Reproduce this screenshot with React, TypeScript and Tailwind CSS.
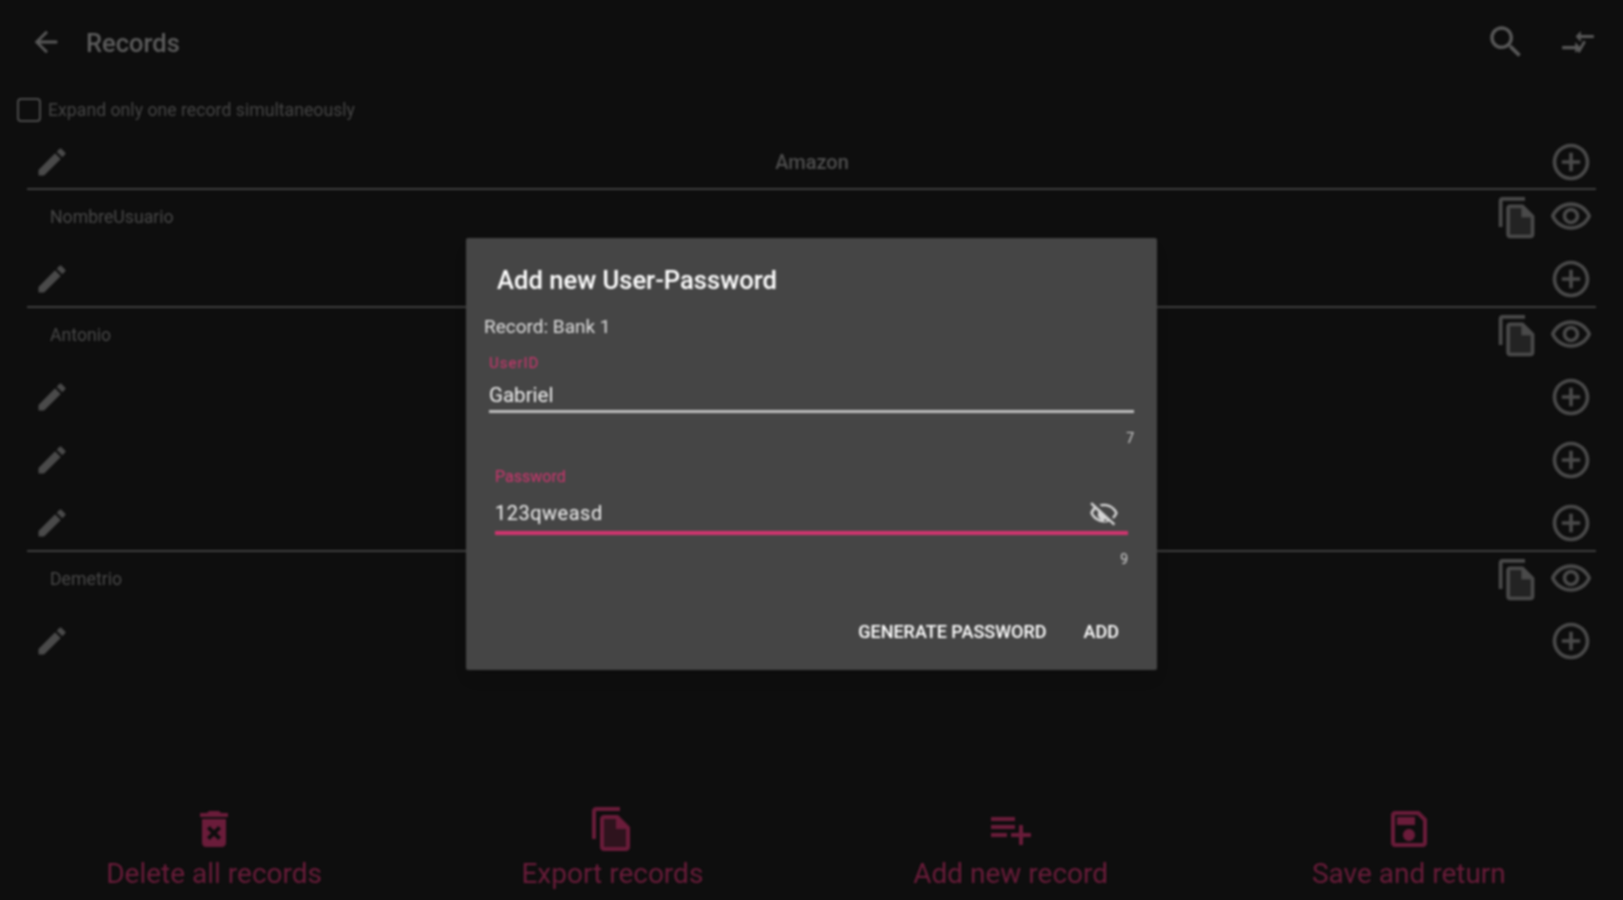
const paths = {
  back: "M20 11H7.83l5.59-5.59L12 4l-8 8 8 8 1.41-1.41L7.83 13H20v-2z",
  search:
    "M15.5 14h-.79l-.28-.27C15.41 12.59 16 11.11 16 9.5 16 5.91 13.09 3 9.5 3S3 5.91 3 9.5 5.91 16 9.5 16c1.61 0 3.09-.59 4.23-1.57l.27.28v.79l5 4.99L20.49 19l-4.99-5zm-6 0C7.01 14 5 11.99 5 9.5S7.01 5 9.5 5 14 7.01 14 9.5 11.99 14 9.5 14z",
  edit: "M3 17.25V21h3.75L17.81 9.94l-3.75-3.75L3 17.25zM20.71 7.04c.39-.39.39-1.02 0-1.41l-2.34-2.34c-.39-.39-1.02-.39-1.41 0l-1.83 1.83 3.75 3.75 1.83-1.83z",
  add: "M13 7h-2v4H7v2h4v4h2v-4h4v-2h-4V7zm-1-5C6.48 2 2 6.48 2 12s4.48 10 10 10 10-4.48 10-10S17.52 2 12 2zm0 18c-4.41 0-8-3.59-8-8s3.59-8 8-8 8 3.59 8 8-3.59 8-8 8z",
  copy: "M16 1H4c-1.1 0-2 .9-2 2v14h2V3h12V1zm-1 4H8c-1.1 0-1.99.9-1.99 2L6 21c0 1.1.89 2 1.99 2H19c1.1 0 2-.9 2-2V11l-6-6zM8 21V7h6v5h5v9H8z",
  copyInner: "M8 21V7h6v5h5v9H8z",
  eye: "M12 6c3.79 0 7.17 2.13 8.82 5.5C19.17 14.87 15.79 17 12 17s-7.17-2.13-8.82-5.5C4.83 8.13 8.21 6 12 6m0-2C7 4 2.73 7.11 1 11.5 2.73 15.89 7 19 12 19s9.27-3.11 11-7.5C21.27 7.11 17 4 12 4zm0 5c1.38 0 2.5 1.12 2.5 2.5S13.38 14 12 14s-2.5-1.12-2.5-2.5S10.62 9 12 9m0-2c-2.48 0-4.5 2.02-4.5 4.5S9.52 16 12 16s4.5-2.02 4.5-4.5S14.48 7 12 7z",
  trash:
    "M6 19c0 1.1.9 2 2 2h8c1.1 0 2-.9 2-2V7H6v12zm2.46-7.12l1.41-1.41L12 12.59l2.12-2.12 1.41 1.41L13.41 14l2.12 2.12-1.41 1.41L12 15.41l-2.12 2.12-1.41-1.41L10.59 14l-2.13-2.12zM15.5 4l-1-1h-5l-1 1H5v2h14V4z",
  playlist: "M14 10H2v2h12v-2zm0-4H2v2h12V6zm4 8v-4h-2v4h-4v2h4v4h2v-4h4v-2h-4zM2 16h8v-2H2v2z",
  save: "M17 3H5c-1.11 0-2 .9-2 2v14c0 1.1.89 2 2 2h14c1.1 0 2-.9 2-2V7l-4-4zm2 16H5V5h11.17L19 7.83V19zm-7-7c-1.66 0-3 1.34-3 3s1.34 3 3 3 3-1.34 3-3-1.34-3-3-3zM6 6h9v4H6V6z",
  swap: "M2 14.5h8.2V12l3.3 3.5-3.3 3.5v-2.5H2v-2zM22 9.5h-8.2V12l-3.3-3.5L13.8 5v2.5H22v2zM15.5 11l1.5 1-4 7-1.5-1 4-7z",
  eyeOff:
    "M12 6.5c3.79 0 7.17 2.13 8.82 5.5-.6 1.2-1.4 2.3-2.4 3.1l1.4 1.4c1.4-1.2 2.5-2.8 3.18-4.5C21.27 7.61 17 4.5 12 4.5c-1.3 0-2.5.2-3.7.6l1.7 1.6c.6-.1 1.3-.2 2-.2zM2.4 3.3L1 4.7l2.7 2.7C2.5 8.5 1.6 10.1 1 12c1.73 4.39 6 7.5 11 7.5 1.5 0 3-.3 4.3-.8l3.3 3.3 1.4-1.4L2.4 3.3zM12 17.5c-3.79 0-7.17-2.13-8.82-5.5.6-1.3 1.5-2.4 2-3.1l2.3 2.3c-.3.5-.48 1.1-.48 1.8 0 2.48 2.02 4.5 4.5 4.5.7 0 1.3-.2 1.8-.5l1.2 1.2c-.8.2-1.6.3-2.5.3z",
};

function Icon({ d, inner, className }: { d: string; inner?: string; className: string }) {
  return (
    <svg viewBox="0 0 24 24" fill="currentColor" className={className}>
      {inner && <path d={inner} opacity={0.35} />}
      <path d={d} />
    </svg>
  );
}

function EditRow({ tall }: { tall?: boolean }) {
  return (
    <div className={`flex items-end justify-between pb-[5px] pl-[7px] pr-[3px] ${tall ? "h-[63px]" : "h-[60px]"}`}>
      <Icon d={paths.edit} className="w-9 h-9 mb-1 text-[#4a4a4a]" />
      <Icon d={paths.add} className="w-11 h-11 text-[#4a4a4a]" />
    </div>
  );
}

function UserRow({ name }: { name: string }) {
  return (
    <div className="flex items-center justify-between h-[56px] pl-[23px] pr-[3px] pb-[2px]">
      <span className="text-[17.7px] text-[#484848]">{name}</span>
      <div className="flex items-center gap-[9px] text-[#4a4a4a]">
        <Icon d={paths.copy} inner={paths.copyInner} className="w-[45px] h-[45px]" />
        <Icon d={paths.eye} className="w-11 h-11" />
      </div>
    </div>
  );
}

function Divider() {
  return <div className="h-[2px] bg-[#3f3f3f]" />;
}

function BottomAction({ d, inner, label }: { d: string; inner?: string; label: string }) {
  return (
    <div className="flex flex-col items-center text-[#6a1c3a]">
      <Icon d={d} inner={inner} className="w-12 h-12" />
      <span className="mt-[2px] text-[28px] leading-[38px]">{label}</span>
    </div>
  );
}

export default function App() {
  return (
    <div className="h-[900px] overflow-hidden bg-[#0e0e0e]">
      <div className="relative h-[900px] flex flex-col font-['Roboto',sans-serif] blur-[0.8px]">
        {/* toolbar */}
        <div className="flex items-center h-[84px] pl-[29px] pr-[26px] text-[#585858]">
          <Icon d={paths.back} className="w-[34px] h-[34px]" />
          <span className="ml-[23px] mt-[2px] text-[25.5px] font-medium text-[#5c5c5c]">Records</span>
          <Icon d={paths.search} className="ml-auto w-[42px] h-[42px]" />
          <Icon d={paths.swap} className="ml-[32px] w-[38px] h-[38px]" />
        </div>

        <div className="flex items-center h-[52px] pl-[17px] text-[17.7px] text-[#454545]">
          <div className="w-6 h-6 rounded-[4px] border-2 border-[#4a4a4a]" />
          <span className="ml-[7px]">Expand only one record simultaneously</span>
        </div>

        {/* records */}
        <div className="mx-[27px]">
          <div className="flex items-center justify-between h-[52px] pl-[7px] pr-[3px]">
            <Icon d={paths.edit} className="w-9 h-9 mr-[5px] text-[#4a4a4a]" />
            <span className="text-[20px] font-medium text-[#4e4e4e]">Amazon</span>
            <Icon d={paths.add} className="w-11 h-11 text-[#4a4a4a]" />
          </div>
          <Divider />
          <UserRow name="NombreUsuario" />
          <EditRow />
          <Divider />
          <UserRow name="Antonio" />
          <EditRow />
          <EditRow tall />
          <EditRow tall />
          <Divider />
          <UserRow name="Demetrio" />
          <EditRow />
        </div>

        {/* bottom actions */}
        <div className="mt-auto grid grid-cols-4 px-[15px] pb-[7px]">
          <BottomAction d={paths.trash} label="Delete all records" />
          <BottomAction d={paths.copy} inner={paths.copyInner} label="Export records" />
          <BottomAction d={paths.playlist} label="Add new record" />
          <BottomAction d={paths.save} label="Save and return" />
        </div>

        {/* dialog */}
        <div className="absolute inset-0 flex items-start justify-center pt-[238px]">
          <div className="w-[691px] h-[432px] bg-[#454545] rounded-[2px] flex flex-col shadow-lg">
            <h2 className="mt-[26px] ml-[31px] text-[25.6px] leading-[32px] font-medium text-white">Add new User-Password</h2>
            <p className="mt-[19px] ml-[18px] text-[19px] leading-[24px] text-[#dedede]">Record: Bank 1</p>

            <div className="mt-[16px] mx-[23px]">
              <div className="text-[15px] leading-[16px] tracking-[1px] text-[#d0356f]">UserID</div>
              <div className="mt-[11px] text-[20.5px] leading-[26px] text-[#f0f0f0]">Gabriel</div>
              <div className="mt-[2px] h-[3px] bg-[#bdbdbd]" />
              <div className="mt-[17px] text-right text-[14px] leading-[16px] text-[#cfcfcf]">7</div>
            </div>

            <div className="mt-[23px] mx-[29px]">
              <div className="text-[16px] leading-[16px] text-[#d0356f]">Password</div>
              <div className="flex items-center justify-between mt-[13px] h-[30px] pr-[9px]">
                <span className="text-[20px] leading-[26px] tracking-[0.5px] text-[#f0f0f0]">123qweasd</span>
                <Icon d={paths.eyeOff} className="w-[30px] h-[30px] text-[#d4d4d4]" />
              </div>
              <div className="mt-[3px] h-[4px] bg-[#d0356f]" />
              <div className="mt-[16px] text-right text-[14px] leading-[16px] text-[#cfcfcf]">9</div>
            </div>

            <div className="flex justify-end gap-[37px] mt-auto mb-[27px] pr-[38px] text-[18px] leading-[22px] font-medium text-white">
              <span>GENERATE PASSWORD</span>
              <span>ADD</span>
            </div>
          </div>
        </div>
      </div>
    </div>
  );
}
